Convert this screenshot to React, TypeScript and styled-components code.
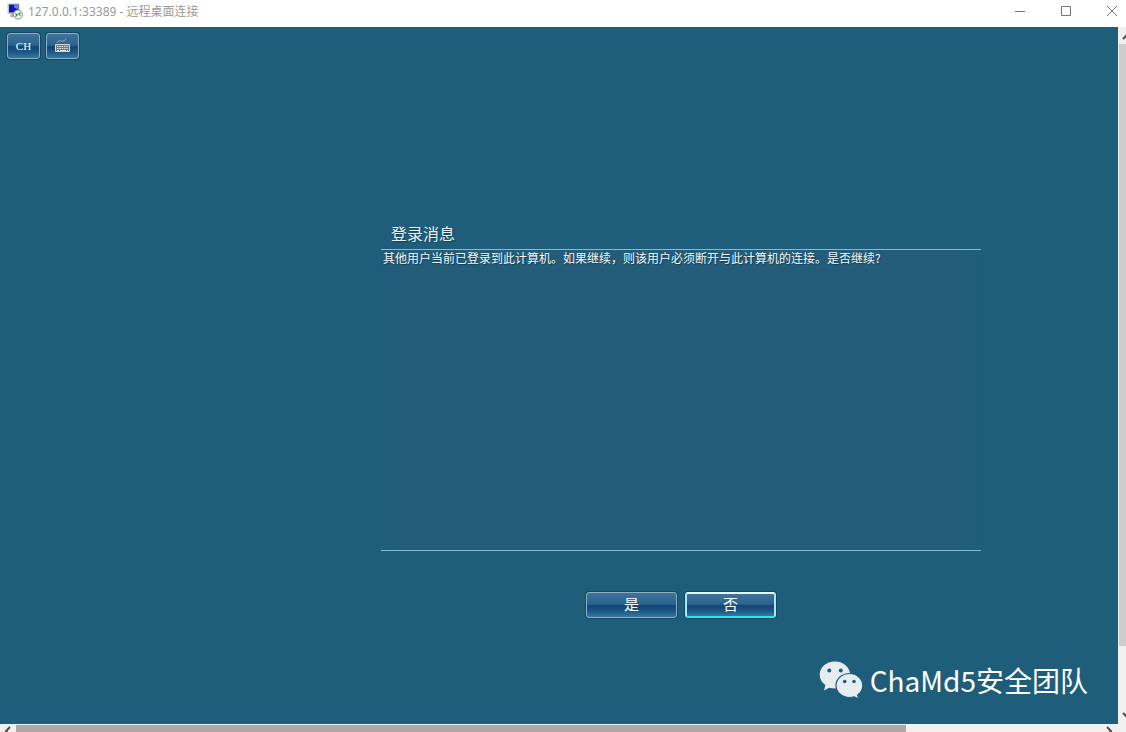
import React from "react";
import styled, { createGlobalStyle } from "styled-components";

const GlobalStyle = createGlobalStyle`
  * { box-sizing: border-box; }
  body {
    margin: 0;
    background: #f0f0f0;
    font-family: "Noto Sans CJK SC", "Noto Sans", sans-serif;
    font-size: 12px;
  }
`;

const Window = styled.div`
  display: grid;
  grid-template-columns: minmax(0, 1fr) 8px;
  grid-template-rows: 27px minmax(0, 1fr) 8px;
  height: 100vh;
  overflow: hidden;
`;

const TitleBar = styled.header`
  grid-column: 1 / -1;
  display: flex;
  justify-content: space-between;
  background: #fff;
  overflow: hidden;
`;

const TitleGroup = styled.div`
  display: flex;
  align-items: flex-start;
  gap: 5px;
  padding: 3px 0 0 7px;
`;

const Title = styled.h1`
  margin: 0;
  font-family: "Noto Sans", "Noto Sans CJK SC", sans-serif;
  font-size: 12px;
  line-height: 18px;
  font-weight: 400;
  color: #999;
`;

const Controls = styled.div`
  display: flex;
  margin-right: -9px;
`;

const ControlButton = styled.button`
  display: flex;
  justify-content: center;
  flex: none;
  width: 46px;
  height: 27px;
  padding: 5px 0 0;
  border: 0;
  background: transparent;
`;

const Desktop = styled.main`
  display: flex;
  flex-direction: column;
  padding: 6px 0 0;
  background: #1e5e7a;
  overflow: hidden;
`;

const Toolbar = styled.div`
  display: flex;
  gap: 6px;
  padding-left: 7px;
`;

const AeroButton = styled.button<{ $focused?: boolean }>`
  display: flex;
  align-items: center;
  justify-content: center;
  padding: 0;
  color: #fff;
  border: 1px solid #8cafc8;
  border-radius: 3px;
  background: linear-gradient(#3f7399 0%, #29648f 46%, #124573 54%, #1d5684 75%, #3478a0 100%);
  box-shadow: 0 0 0 1px #174660;
  ${({ $focused }) =>
    $focused &&
    `
    border-width: 2px;
    border-color: #e4f8ff #a5e9f8 #29e6ee;
  `}
`;

const ToolButton = styled(AeroButton)`
  width: 33px;
  height: 26px;
  font: 11px/14px "Liberation Serif", serif;
`;

const Dialog = styled.section`
  max-width: 600px;
  margin: 162px 137px 0 381px;
`;

const DialogTitle = styled.h2`
  margin: 0;
  padding: 0 10px 4px;
  font-size: 16px;
  line-height: 24px;
  font-weight: 400;
  color: #e8f1f5;
  text-shadow: 1px 1px 1px #153f55;
`;

const Message = styled.p`
  margin: 0;
  height: 302px;
  padding: 0 2px;
  border-top: 1px solid #82bdd6;
  border-bottom: 1px solid #82bdd6;
  background: linear-gradient(90deg, #1e5e7a 0, #235d7a 24px, #235d7a 570px, #1e5e7a 600px);
  line-height: 16px;
  color: #f2f8fa;
  text-shadow: 1px 1px 1px #153f55;
`;

const Actions = styled.div`
  display: flex;
  justify-content: center;
  gap: 8px;
  padding-top: 41px;
`;

const ActionButton = styled(AeroButton)`
  width: 91px;
  height: 26px;
  padding-bottom: 2px;
  font: 15px/20px "Noto Sans CJK SC", sans-serif;
`;

const Watermark = styled.div`
  display: flex;
  align-items: center;
  align-self: flex-end;
  gap: 7px;
  margin: auto 30px 24px 0;
  color: #fff;
  font-size: 28px;
  line-height: 40px;
`;

const VerticalBar = styled.div`
  display: flex;
  flex-direction: column;
  justify-content: space-between;
  padding-left: 1px;
  background: #f0f0f0;
  overflow: hidden;
`;

const VerticalThumb = styled.div`
  flex: 602;
  background: #cdcdcd;
`;

const HorizontalBar = styled.div`
  grid-column: 1 / -1;
  display: flex;
  padding-top: 1px;
  background: #f0f0f0;
  overflow: hidden;
`;

const HorizontalThumb = styled.div`
  flex: 890;
  background: #aaa8a9;
`;

const Gap = styled.div<{ $share: number }>`
  flex: ${({ $share }) => $share};
`;

const ArrowSlot = styled.div`
  display: flex;
  flex: none;
  width: 16px;
  height: 17px;
`;

function Arrow({ d }: { d: string }) {
  return (
    <ArrowSlot>
      <svg width="16" height="17" viewBox="0 0 16 17" fill="none" stroke="#505050" strokeWidth="2" aria-hidden="true">
        <path d={d} />
      </svg>
    </ArrowSlot>
  );
}

function RemoteIcon() {
  return (
    <svg width="16" height="17" viewBox="0 0 16 17" aria-hidden="true">
      <path d="M4 10h5l1 4H3z" fill="#a8afb5" />
      <path d="M0.5 0.5h12v10.5h-12z" fill="#c4c7ca" />
      <path d="M2 1.5h9.500v8H2z" fill="#1616a8" />
      <path d="M7 1.5h4.500v5l-4.500-2z" fill="#5d86dc" />
      <circle cx="11" cy="11.5" r="4.5" fill="#f4f8f4" stroke="#858b88" />
      <path d="M8.5 10.5l1.7 1.500-1.7 1.500M13.5 9.5l-1.700 1.500 1.700 1.500" fill="none" stroke="#328837" strokeWidth="1.2" />
    </svg>
  );
}

function KeyboardIcon() {
  return (
    <svg width="17" height="14" viewBox="0 0 17 14" fill="none" aria-hidden="true">
      <path d="M3 4c1-3 3-2 5-2s3 0 4-2" stroke="#9ab2bf" />
      <path d="M1.5 5.5h14v7h-14z" fill="#6d7880" stroke="#d3d7d8" />
      <path d="M3 7.5h11M3 9.5h11" stroke="#e6e4df" strokeDasharray="1.5 .8" />
      <path d="M3 11.5h2M6 11.5h6M13 11.5h1" stroke="#e6e4df" />
    </svg>
  );
}

function WeChatIcon() {
  return (
    <svg width="44" height="38" viewBox="0 0 44 38" aria-hidden="true">
      <path
        d="M16 0.5C7.3 0.5 0.7 6.3 0.7 13.7c0 4.3 2.2 8 5.7 10.4L5 29.500l5.300-2.800c1.8.5 3.7.8 5.7.8 8.5 0 15.2-6 15.2-13.500S24.5.5 16 .5z"
        fill="#e5edf1"
      />
      <path
        d="M30.5 12.500c-7.500 0-13.500 5.400-13.500 12s6 12 13.500 12c1.700 0 3.200-.2 4.700-.7l4.600 2.200-1.200-4.100c3.300-2.200 5.200-5.500 5.200-9.400 0-6.600-5.900-12-13.300-12z"
        fill="#e5edf1"
        stroke="#1e5e7a"
        strokeWidth="1.2"
      />
      <g fill="#245d76">
        <circle cx="10.3" cy="9.5" r="2" />
        <circle cx="21.8" cy="9.5" r="2" />
        <circle cx="25.7" cy="20.5" r="1.8" />
        <circle cx="35" cy="20.5" r="1.8" />
      </g>
    </svg>
  );
}

export default function App() {
  return (
    <>
      <GlobalStyle />
      <Window>
        <TitleBar>
          <TitleGroup>
            <RemoteIcon />
            <Title>127.0.0.1:33389 - 远程桌面连接</Title>
          </TitleGroup>
          <Controls>
            <ControlButton aria-label="最小化">
              <svg width="12" height="12" fill="none" stroke="#777"><path d="M1 6.5h10" /></svg>
            </ControlButton>
            <ControlButton aria-label="最大化">
              <svg width="12" height="12" fill="none" stroke="#777"><path d="M1.5 1.5h9v9h-9z" /></svg>
            </ControlButton>
            <ControlButton aria-label="关闭">
              <svg width="12" height="12" fill="none" stroke="#777"><path d="M1 1l10 10M11 1L1 11" /></svg>
            </ControlButton>
          </Controls>
        </TitleBar>
        <Desktop>
          <Toolbar>
            <ToolButton>CH</ToolButton>
            <ToolButton aria-label="键盘"><KeyboardIcon /></ToolButton>
          </Toolbar>
          <Dialog aria-labelledby="dialog-title">
            <DialogTitle id="dialog-title">登录消息</DialogTitle>
            <Message>其他用户当前已登录到此计算机。如果继续，则该用户必须断开与此计算机的连接。是否继续?</Message>
            <Actions>
              <ActionButton>是</ActionButton>
              <ActionButton $focused>否</ActionButton>
            </Actions>
          </Dialog>
          <Watermark>
            <WeChatIcon />
            <span>ChaMd5安全团队</span>
          </Watermark>
        </Desktop>
        <VerticalBar>
          <Arrow d="M4 12l4-4 4 4" />
          <VerticalThumb />
          <Gap $share={61} />
          <Arrow d="M4 6l4 4 4-4" />
        </VerticalBar>
        <HorizontalBar>
          <Arrow d="M10 2L6 6l4 4" />
          <HorizontalThumb />
          <Gap $share={196} />
          <Arrow d="M5 2l4 4-4 4" />
          <Gap $share={8} />
        </HorizontalBar>
      </Window>
    </>
  );
}
